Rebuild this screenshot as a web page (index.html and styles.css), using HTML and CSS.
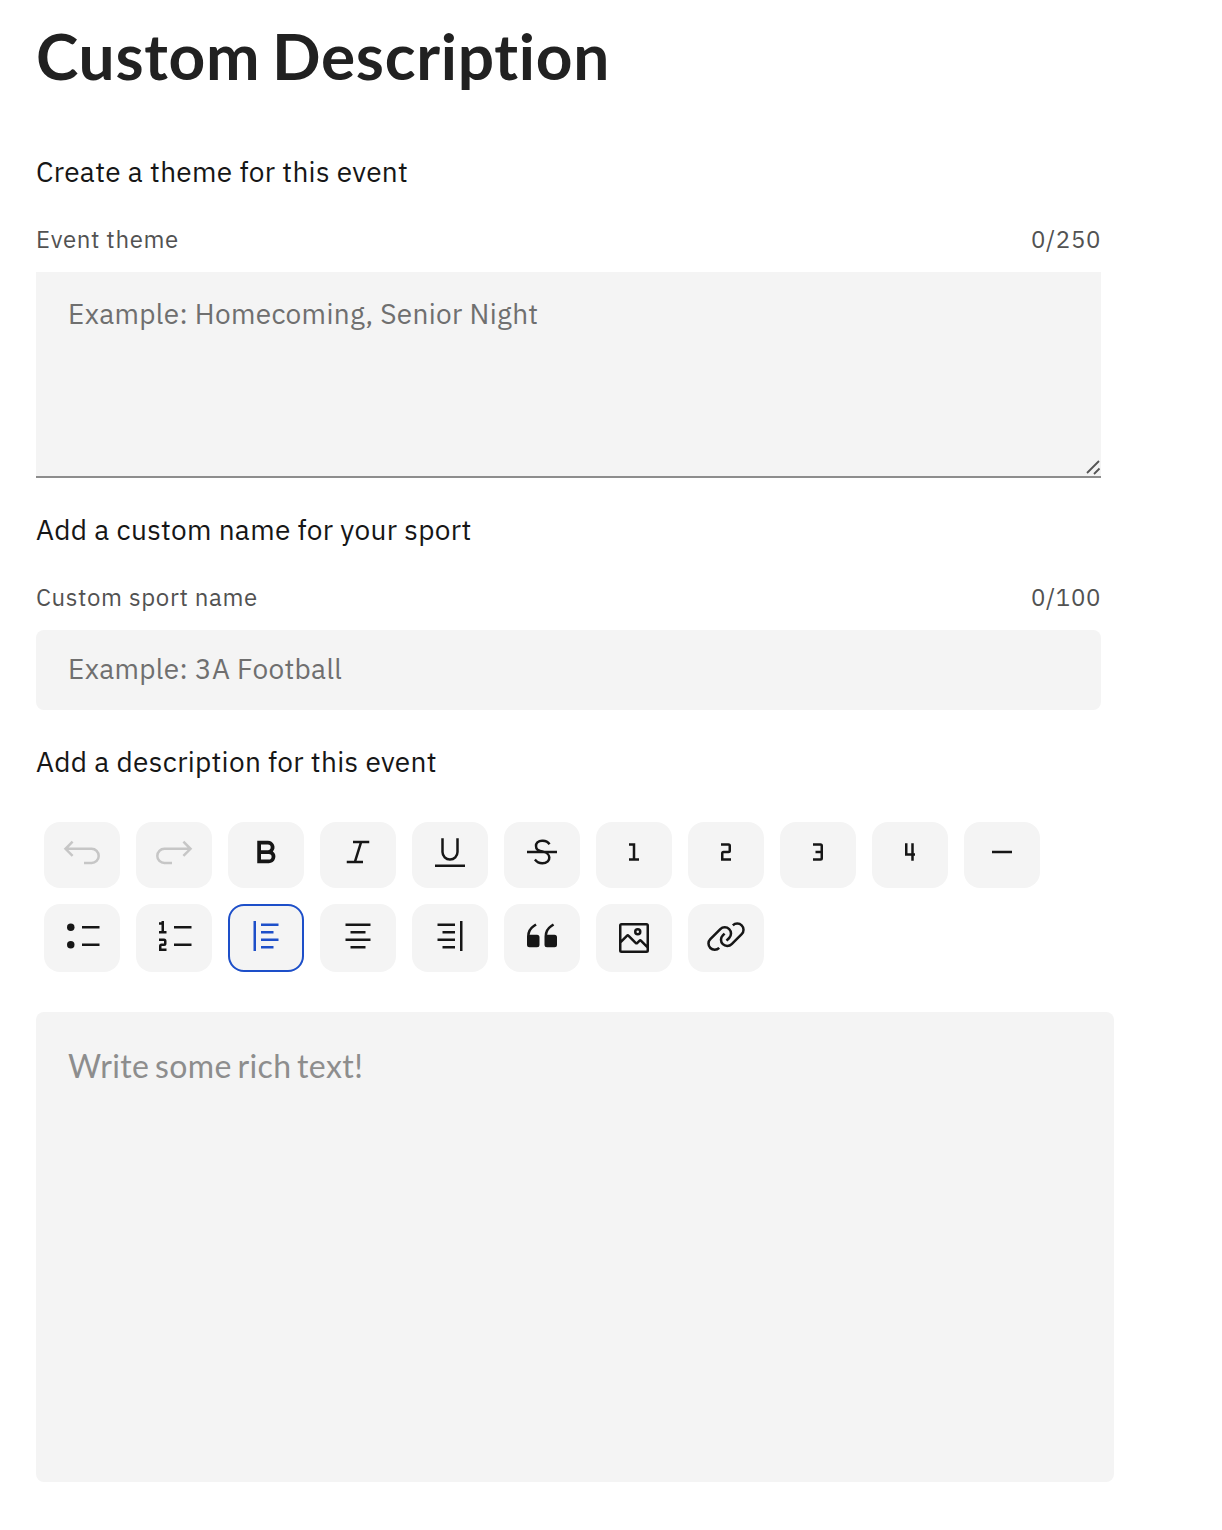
FILE: index.html
```html
<!DOCTYPE html>
<html lang="en">
<head>
<meta charset="utf-8">
<title>Custom Description</title>
<link rel="stylesheet" href="styles.css">
</head>
<body>
<main class="page">
  <h1 class="title">Custom Description</h1>

  <section class="group theme">
    <h2 class="heading">Create a theme for this event</h2>
    <div class="label-row"><label for="theme">Event theme</label><span class="count">0/250</span></div>
    <div class="area-wrap">
      <textarea id="theme" class="area" placeholder="Example: Homecoming, Senior Night"></textarea>
      <svg class="grip" width="16" height="16" viewBox="0 0 16 16"><path d="M2 14 14 2M9 15l5.5-5.5"/></svg>
    </div>
  </section>

  <section class="group sport">
    <h2 class="heading">Add a custom name for your sport</h2>
    <div class="label-row"><label for="sport">Custom sport name</label><span class="count">0/100</span></div>
    <input id="sport" class="input" type="text" placeholder="Example: 3A Football">
  </section>

  <section class="description">
    <h2 class="heading">Add a description for this event</h2>
    <div class="toolbar">
      <button class="tool disabled" aria-label="Undo"><svg viewBox="0 0 40 40"><path class="line" d="M22 31h7.6a7.1 7.1 0 0 0 0-14.2H3.8M10.6 9.7 3.5 16.8l7.1 7.1"/></svg></button>
      <button class="tool disabled" aria-label="Redo"><svg viewBox="0 0 40 40"><path class="line" d="M18 31h-7.6a7.1 7.1 0 0 1 0-14.2h25.8M29.4 9.7l7.1 7.1-7.1 7.1"/></svg></button>
      <button class="tool" aria-label="Bold"><svg viewBox="0 0 32 32"><path d="M18.25 25H9V7h8.5a5.25 5.25 0 0 1 4 8.65A5.25 5.25 0 0 1 18.25 25ZM12 22h6.23a2.25 2.25 0 1 0 0-4.5H12Zm0-7.5h5.5a2.25 2.25 0 1 0 0-4.5H12Z"/></svg></button>
      <button class="tool" aria-label="Italic"><svg viewBox="0 0 32 32"><path d="M25 9V7H12v2h5.14l-4.37 14H7v2h13v-2h-5.14l4.37-14Z"/></svg></button>
      <button class="tool" aria-label="Underline"><svg viewBox="0 0 32 32"><path d="M4 26h24v2H4ZM16 23a7 7 0 0 1-7-7V5h2v11a5 5 0 0 0 10 0V5h2v11a7 7 0 0 1-7 7Z"/></svg></button>
      <button class="tool" aria-label="Strikethrough"><svg viewBox="0 0 32 32"><path d="M28 15H17.956c-.452-.124-.904-.232-1.338-.335-2.808-.664-4.396-1.15-4.396-3.423a2.868 2.868 0 0 1 .787-2.145 4.789 4.789 0 0 1 3.013-1.09c2.83-.07 4.135.89 5.201 2.35l1.616-1.179a7.473 7.473 0 0 0-6.83-3.17 6.773 6.773 0 0 0-4.4 1.66 4.827 4.827 0 0 0-1.387 3.574A4.372 4.372 0 0 0 11.957 15H4v2h13.652c1.967.57 3.143 1.312 3.173 3.358a3.119 3.119 0 0 1-.862 2.393A5.824 5.824 0 0 1 16.243 24a6.634 6.634 0 0 1-5.145-2.691l-1.533 1.284A8.526 8.526 0 0 0 16.212 26h.018a7.669 7.669 0 0 0 5.099-1.84 5.083 5.083 0 0 0 1.49-4.01A4.957 4.957 0 0 0 21.1 17H28Z"/></svg></button>
      <button class="tool" aria-label="Heading 1"><svg viewBox="0 0 32 32"><path d="M15 21V11h-3V9h5v12h3v2h-8v-2Z"/></svg></button>
      <button class="tool" aria-label="Heading 2"><svg viewBox="0 0 32 32"><path d="M20 23h-8v-6a2 2 0 0 1 2-2h4v-4h-6V9h6a2 2 0 0 1 2 2v4a2 2 0 0 1-2 2h-4v4h6Z"/></svg></button>
      <button class="tool" aria-label="Heading 3"><svg viewBox="0 0 32 32"><path d="M18 9h-6v2h6v4h-4v2h4v4h-6v2h6a2 2 0 0 0 2-2V11a2 2 0 0 0-2-2Z"/></svg></button>
      <button class="tool" aria-label="Heading 4"><svg viewBox="0 0 32 32"><path d="M17 9v8h-3V9h-2v10h5v4h2v-4h1v-2h-1V9Z"/></svg></button>
      <button class="tool" aria-label="Horizontal rule"><svg viewBox="0 0 32 32"><path d="M8 15h16v2H8Z"/></svg></button>
      <button class="tool tall" aria-label="Bulleted list"><svg viewBox="0 0 32 32"><circle cx="7" cy="9" r="3"/><circle cx="7" cy="23" r="3"/><path d="M16 22h14v2H16ZM16 8h14v2H16Z"/></svg></button>
      <button class="tool tall" aria-label="Numbered list"><svg viewBox="0 0 32 32"><path d="M16 22h14v2H16ZM16 8h14v2H16ZM8 12V4H6v1H4v2h2v5H4v2h6v-2ZM10 28H4v-4a2 2 0 0 1 2-2h2v-2H4v-2h4a2 2 0 0 1 2 2v2a2 2 0 0 1-2 2H6v2h4Z"/></svg></button>
      <button class="tool tall active" aria-label="Align left"><svg viewBox="0 0 32 32"><path d="M12 6h14v2H12ZM12 12h10v2H12ZM12 18h14v2H12ZM12 24h10v2H12ZM6 4h2v24H6Z"/></svg></button>
      <button class="tool tall" aria-label="Align center"><svg viewBox="0 0 32 32"><path d="M6 6h20v2H6ZM10 12h12v2H10ZM6 18h20v2H6ZM10 24h12v2H10Z"/></svg></button>
      <button class="tool tall" aria-label="Align right"><svg viewBox="0 0 32 32"><path d="M6 6h14v2H6ZM10 12h10v2H10ZM6 18h14v2H6ZM10 24h10v2H10ZM24 4h2v24h-2Z"/></svg></button>
      <button class="tool tall" aria-label="Quote"><svg viewBox="0 0 32 32"><path d="M12 15H6.11A9 9 0 0 1 10 8.86l1.79-1.2L10.69 6 8.9 7.2A11 11 0 0 0 4 16.35V23a2 2 0 0 0 2 2h6a2 2 0 0 0 2-2v-6a2 2 0 0 0-2-2ZM26 15h-5.89A9 9 0 0 1 24 8.86l1.79-1.2L24.7 6l-1.8 1.2a11 11 0 0 0-4.9 9.15V23a2 2 0 0 0 2 2h6a2 2 0 0 0 2-2v-6a2 2 0 0 0-2-2Z"/></svg></button>
      <button class="tool tall image" aria-label="Image"><svg viewBox="0 0 32 32"><path d="M19 14a3 3 0 1 0-3-3 3 3 0 0 0 3 3Zm0-4a1 1 0 1 1-1 1 1 1 0 0 1 1-1Z"/><path d="M26 4H6a2 2 0 0 0-2 2v20a2 2 0 0 0 2 2h20a2 2 0 0 0 2-2V6a2 2 0 0 0-2-2Zm0 22H6v-6l5-5 5.59 5.59a2 2 0 0 0 2.82 0L21 19l5 5Zm0-4.83-3.59-3.59a2 2 0 0 0-2.82 0L18 19.17l-5.59-5.59a2 2 0 0 0-2.82 0L6 17.17V6h20Z"/></svg></button>
      <button class="tool tall" aria-label="Link"><svg viewBox="0 0 32 32"><path d="M29.25 6.76a6 6 0 0 0-8.5 0l1.42 1.42a4 4 0 1 1 5.67 5.67l-8 8a4 4 0 1 1-5.67-5.66l1.41-1.42-1.41-1.42-1.42 1.42a6 6 0 0 0 0 8.5A6 6 0 0 0 17 25a6 6 0 0 0 4.27-1.76l8-8a6 6 0 0 0-.02-8.48Z"/><path d="M4.19 24.82a4 4 0 0 1 0-5.67l8-8a4 4 0 0 1 5.67 0A3.94 3.94 0 0 1 19 14a4 4 0 0 1-1.17 2.85L15.71 19l1.42 1.42 2.12-2.12a6 6 0 0 0-8.51-8.51l-8 8a6 6 0 0 0 0 8.51A6 6 0 0 0 7 28a6.07 6.07 0 0 0 4.28-1.76l-1.42-1.42a4 4 0 0 1-5.67 0Z"/></svg></button>
    </div>
    <div class="editor" contenteditable="true"><p class="hint">Write some rich text!</p></div>
  </section>
</main>
</body>
</html>
```
FILE: styles.css
```css
* { box-sizing: border-box; }
body {
  margin: 0;
  background: #fff;
  color: #161616;
  font-family: "IBM Plex Sans", Roboto, sans-serif;
}
.page { padding: 16px 108px 48px 36px; }
.title {
  margin: 0;
  height: 80px;
  font: 700 64px/80px Lato, sans-serif;
  font-variant-ligatures: none;
  letter-spacing: 0.7px;
  word-spacing: -4.5px;
  color: #212121;
}
.group { width: 1065px; }
.theme { margin-top: 56px; }
.sport { margin-top: 32px; }
.description { margin-top: 32px; }
.heading {
  margin: 0;
  font-size: 28px;
  line-height: 40px;
  font-weight: 400;
  letter-spacing: 0.32px;
}
.label-row {
  display: flex;
  justify-content: space-between;
  height: 32px;
  margin: 31px 0 17px;
  font-size: 24px;
  line-height: 32px;
  letter-spacing: 0.64px;
  color: #525252;
}
.area-wrap { position: relative; height: 206px; }
.area, .input {
  display: block;
  width: 100%;
  border: 0;
  outline: 0;
  background: #f4f4f4;
  padding: 0 32px;
  font: 400 28px/36px "IBM Plex Sans", Roboto, sans-serif;
  letter-spacing: 0.32px;
}
.area {
  height: 206px;
  padding-top: 24px;
  border-bottom: 2px solid #8d8d8d;
  resize: none;
}
.area::placeholder, .input::placeholder { color: #6f6f6f; opacity: 1; }
.grip {
  position: absolute;
  right: 0;
  bottom: 3px;
  fill: none;
  stroke: #555;
  stroke-width: 1.8;
}
.input { height: 80px; padding-bottom: 3px; border-radius: 8px; }
.toolbar {
  display: flex;
  flex-wrap: wrap;
  gap: 16px;
  width: 1020px;
  margin-top: 40px;
  padding-left: 8px;
}
.tool {
  display: flex;
  justify-content: center;
  width: 76px;
  height: 66px;
  padding: 10px 0 0;
  border: 0;
  border-radius: 16px;
  background: #f4f4f4;
  color: #161616;
}
.tool svg { width: 40px; height: 40px; fill: currentColor; flex: none; }
.tool .line { fill: none; stroke: currentColor; stroke-width: 2.5; }
.tool.disabled { color: #c6c6c6; }
.tall { height: 68px; padding-top: 12px; }
.image { padding-top: 14px; }
.active { box-shadow: inset 0 0 0 2px #1d4fc9; color: #1d4fc9; }
.editor {
  height: 470px;
  margin-top: 40px;
  padding: 31px 32px;
  border-radius: 8px;
  background: #f4f4f4;
}
.hint {
  margin: 0;
  font: 400 32px/46px Lato, sans-serif;
  font-variant-ligatures: none;
  letter-spacing: 0.4px;
  word-spacing: -3px;
  color: #8d8d8d;
}
```
